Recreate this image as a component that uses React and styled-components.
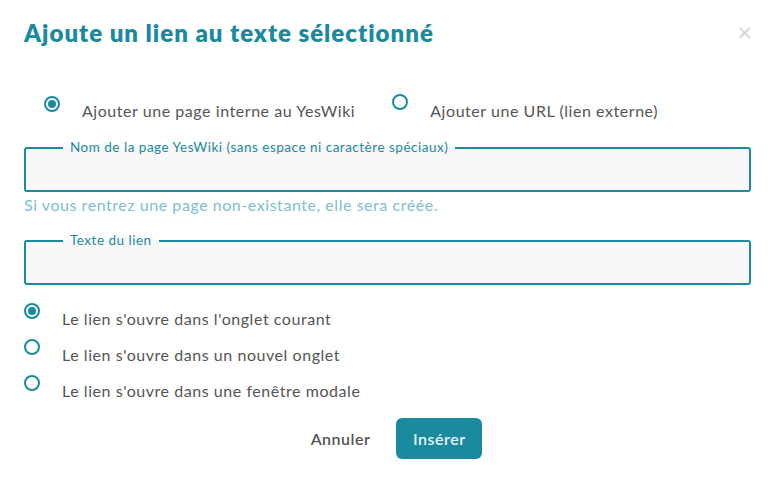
import React from "react";
import styled, { createGlobalStyle } from "styled-components";

const TEAL = "#1a8a9e";

const Global = createGlobalStyle`
  html, body { margin: 0; padding: 0; background: #fff; }
  body { font-family: "Lato", "Noto Sans", sans-serif; color: #555; }
  * { box-sizing: border-box; }
`;

const Modal = styled.div`
  width: 780px;
  height: 477px;
  padding: 17px 29px 0 24px;
  display: flex;
  flex-direction: column;
`;

const Header = styled.div`
  display: flex;
  align-items: center;
  justify-content: space-between;
  height: 30px;
`;

const Title = styled.h1`
  margin: 0;
  font-size: 24px;
  font-weight: 800;
  color: ${TEAL};
  letter-spacing: 1px;
`;

const Close = styled.button`
  border: none;
  background: none;
  padding: 0;
  margin-right: -2px;
  color: #d4d4d4;
  font-size: 20px;
  font-family: "DejaVu Sans", sans-serif;
  line-height: 1;
  cursor: pointer;
`;

const ChoiceRow = styled.div`
  display: flex;
  gap: 37px;
  padding-left: 20px;
  margin-top: 54px;
`;

const OptionList = styled.div`
  display: flex;
  flex-direction: column;
  gap: 16px;
  margin-top: 24px;
`;

const Option = styled.label`
  display: flex;
  align-items: flex-start;
  gap: 22px;
  font-size: 16px;
  letter-spacing: 0.55px;
  color: #555;
  line-height: 20px;
  cursor: pointer;
`;

const Radio = styled.span`
  width: 16px;
  height: 16px;
  border-radius: 50%;
  border: 2px solid ${TEAL};
  flex: none;
  display: flex;
  align-items: center;
  justify-content: center;
  margin-top: ${(p) => p.$lift || -6}px;
  &::after {
    content: "";
    width: 8px;
    height: 8px;
    border-radius: 50%;
    background: ${(p) => (p.$checked ? TEAL : "transparent")};
  }
`;

const Field = styled.fieldset`
  margin: ${(p) => p.$top || 0}px 0 0 0;
  padding: 0;
  border: 2px solid ${TEAL};
  border-radius: 3px;
  background: #f8f8f8;
  height: 52px;
  min-width: 0;
`;

const Legend = styled.legend`
  margin-left: 37px;
  padding: 0 7px;
  font-size: 13.5px;
  letter-spacing: 0.5px;
  line-height: 15px;
  color: ${TEAL};
`;

const Input = styled.input`
  display: block;
  width: 100%;
  height: 36px;
  border: none;
  background: transparent;
  outline: none;
  font: inherit;
  padding: 0 12px;
`;

const Help = styled.p`
  margin: 3px 0 0 0;
  font-size: 16px;
  letter-spacing: 0.55px;
  line-height: 20px;
  color: #80bfca;
`;

const Actions = styled.div`
  display: flex;
  justify-content: center;
  align-items: center;
  gap: 10px;
  margin-top: 17px;
  padding-left: 2px;
`;

const Button = styled.button`
  height: 41px;
  padding: 0 16px;
  border-radius: 6px;
  border: none;
  font-family: inherit;
  font-size: 16px;
  font-weight: 600;
  letter-spacing: 0.5px;
  cursor: pointer;
  background: ${(p) => (p.$primary ? TEAL : "transparent")};
  color: ${(p) => (p.$primary ? "#e6f3f5" : "#555")};
  width: ${(p) => (p.$primary ? "86px" : "auto")};
`;

export default function App() {
  return (
    <>
      <Global />
      <Modal>
        <Header>
          <Title>Ajoute un lien au texte sélectionné</Title>
          <Close>×</Close>
        </Header>
        <ChoiceRow>
          <Option>
            <Radio $checked $lift={-5} />
            Ajouter une page interne au YesWiki
          </Option>
          <Option>
            <Radio $lift={-7} />
            Ajouter une URL (lien externe)
          </Option>
        </ChoiceRow>
        <Field $top={19}>
          <Legend>Nom de la page YesWiki (sans espace ni caractère spéciaux)</Legend>
          <Input />
        </Field>
        <Help>Si vous rentrez une page non-existante, elle sera créée.</Help>
        <Field $top={18}>
          <Legend>Texte du lien</Legend>
          <Input />
        </Field>
        <OptionList>
          <Option>
            <Radio $checked />
            Le lien s'ouvre dans l'onglet courant
          </Option>
          <Option>
            <Radio />
            Le lien s'ouvre dans un nouvel onglet
          </Option>
          <Option>
            <Radio />
            Le lien s'ouvre dans une fenêtre modale
          </Option>
        </OptionList>
        <Actions>
          <Button>Annuler</Button>
          <Button $primary>Insérer</Button>
        </Actions>
      </Modal>
    </>
  );
}
